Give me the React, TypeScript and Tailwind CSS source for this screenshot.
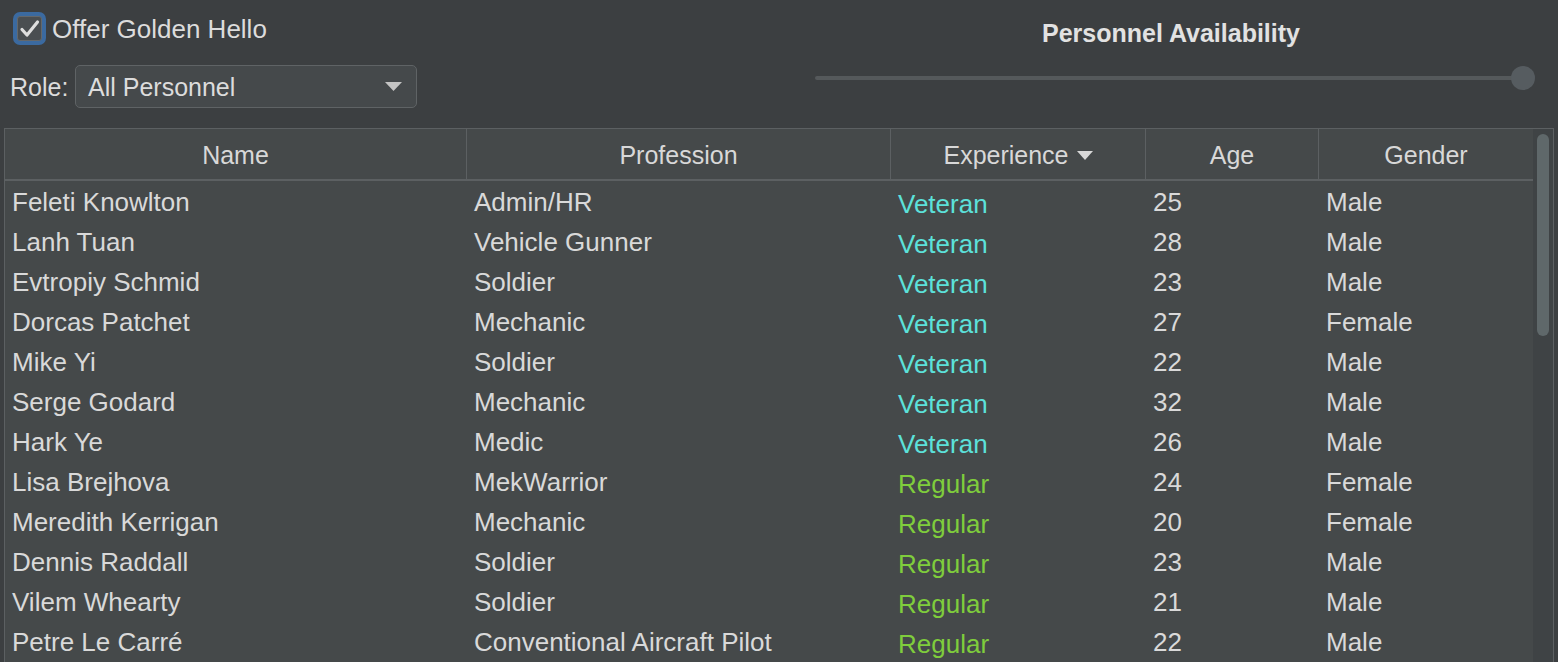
const rows = [
  { name: "Feleti Knowlton", profession: "Admin/HR", exp: "Veteran", age: 25, gender: "Male" },
  { name: "Lanh Tuan", profession: "Vehicle Gunner", exp: "Veteran", age: 28, gender: "Male" },
  { name: "Evtropiy Schmid", profession: "Soldier", exp: "Veteran", age: 23, gender: "Male" },
  { name: "Dorcas Patchet", profession: "Mechanic", exp: "Veteran", age: 27, gender: "Female" },
  { name: "Mike Yi", profession: "Soldier", exp: "Veteran", age: 22, gender: "Male" },
  { name: "Serge Godard", profession: "Mechanic", exp: "Veteran", age: 32, gender: "Male" },
  { name: "Hark Ye", profession: "Medic", exp: "Veteran", age: 26, gender: "Male" },
  { name: "Lisa Brejhova", profession: "MekWarrior", exp: "Regular", age: 24, gender: "Female" },
  { name: "Meredith Kerrigan", profession: "Mechanic", exp: "Regular", age: 20, gender: "Female" },
  { name: "Dennis Raddall", profession: "Soldier", exp: "Regular", age: 23, gender: "Male" },
  { name: "Vilem Whearty", profession: "Soldier", exp: "Regular", age: 21, gender: "Male" },
  { name: "Petre Le Carré", profession: "Conventional Aircraft Pilot", exp: "Regular", age: 22, gender: "Male" },
];

const font = { fontFamily: '"Liberation Sans", Arial, sans-serif' };

const HeaderCell = ({ label, sorted, last }: { label: string; sorted?: boolean; last?: boolean }) => (
  <div
    className={`flex items-center justify-center gap-[8px] pt-[3px] text-[25px] text-[#d8d8d8] ${
      last ? "" : "border-r border-[#5c6062]"
    }`}
  >
    <span>{label}</span>
    {sorted && (
      <svg width="16" height="9" viewBox="0 0 16 9">
        <path d="M0 0 L16 0 L8 9 Z" fill="#d8d8d8" />
      </svg>
    )}
  </div>
);

const App = () => {
  return (
    <div className="w-[1558px] h-[662px] overflow-hidden bg-[#3c3f41] text-[#dadada]" style={font}>
      <div className="flex h-[128px]">
        <div className="w-[815px] flex flex-col">
          <div className="flex items-center mt-[12px] ml-[13px] h-[33px]">
            <div className="w-[33px] h-[33px] rounded-[7px] bg-[#3b6aa0] p-[4px]">
              <div className="w-full h-full rounded-[3px] bg-[#4a4e51] border border-[#64686b] flex items-center justify-center">
                <svg width="21" height="19" viewBox="0 0 21 19">
                  <path d="M3 10.5 L8 16 L18.5 3" stroke="#dedede" strokeWidth="3.2" fill="none" strokeLinecap="round" strokeLinejoin="round" />
                </svg>
              </div>
            </div>
            <span className="ml-[6px] pt-[2px] text-[26px] text-[#dcdcdc]">Offer Golden Hello</span>
          </div>
          <div className="flex items-center mt-[20px] ml-[10px]">
            <span className="text-[25px] text-[#dcdcdc] w-[65px] pt-[2px]">Role:</span>
            <div className="w-[342px] h-[43px] rounded-[5px] border border-[#5f6365] bg-[#45494b] flex items-center justify-between pl-[12px] pr-[14px]">
              <span className="text-[25px] text-[#dcdcdc] pt-[2px]">All Personnel</span>
              <svg width="17" height="9" viewBox="0 0 17 9">
                <path d="M0 0 L17 0 L8.5 9 Z" fill="#c4c4c4" />
              </svg>
            </div>
          </div>
        </div>
        <div className="w-[708px] flex flex-col items-center">
          <div className="mt-[18px] h-[30px] leading-[30px] text-[25px] font-bold text-[#e2e2e2] mr-[-4px]">
            Personnel Availability
          </div>
          <div className="relative w-[708px] h-[4px] mt-[28px] rounded-full bg-[#55595b]">
            <div className="absolute right-[-12px] top-1/2 -translate-y-1/2 w-[24px] h-[24px] rounded-full bg-[#565c60]" />
          </div>
        </div>
      </div>

      <div className="mx-[4px] border border-[#5c6062] flex h-[600px]">
        <div className="flex-1 bg-[#45494a]">
          <div className="grid grid-cols-[462px_424px_255px_173px_1fr] h-[52px] border-b-2 border-[#5c6062]">
            <HeaderCell label="Name" />
            <HeaderCell label="Profession" />
            <HeaderCell label="Experience" sorted />
            <HeaderCell label="Age" />
            <HeaderCell label="Gender" last />
          </div>
          {rows.map((r, i) => (
            <div key={i} className="grid grid-cols-[462px_424px_255px_173px_1fr] h-[40px] items-center pb-[4px] text-[26px] text-[#d9d9d9]">
              <div className="pl-[7px] whitespace-nowrap">{r.name}</div>
              <div className="pl-[7px] whitespace-nowrap">{r.profession}</div>
              <div className={`pl-[7px] pt-[4px] ${r.exp === "Veteran" ? "text-[#5ce1da]" : "text-[#7fcd3c]"}`}>
                {r.exp}
              </div>
              <div className="pl-[7px]">{r.age}</div>
              <div className="pl-[7px]">{r.gender}</div>
            </div>
          ))}
        </div>
        <div className="w-[20px] bg-[#3f4345] pt-[5px] px-[4px]">
          <div className="h-[202px] rounded-full bg-[#5f686a]" />
        </div>
      </div>
    </div>
  );
};

export default App;
